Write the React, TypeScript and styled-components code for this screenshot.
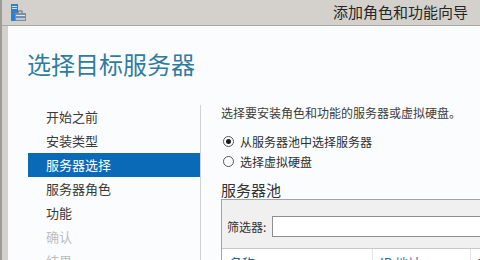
import React from "react";
import styled, { createGlobalStyle } from "styled-components";

const GlobalStyle = createGlobalStyle`
  html, body {
    margin: 0;
    padding: 0;
    background: #fbfcfd;
  }
  * {
    box-sizing: border-box;
  }
`;

const Window = styled.div`
  width: 480px;
  height: 260px;
  overflow: hidden;
  display: flex;
  flex-direction: column;
  background: #d4d1cc;
  border-left: 2px solid #9c9b98;
  font-family: "Noto Sans CJK SC", "Noto Sans", sans-serif;
  color: #333;
`;

const TitleBar = styled.div`
  height: 26px;
  flex-shrink: 0;
  display: flex;
  align-items: center;
  justify-content: space-between;
  padding: 0 12px 0 8px;
  border-bottom: 1px solid #a9a8a5;
`;

const Title = styled.div`
  font-size: 15px;
  line-height: 20px;
  color: #262626;
  margin-top: -2px;
`;

const Content = styled.div`
  flex: 1;
  margin-left: 6px;
  background: #fbfcfd;
  display: flex;
  flex-direction: column;
  min-height: 0;
`;

const Heading = styled.h1`
  margin: 23px 0 0 19px;
  font-size: 24px;
  line-height: 30px;
  font-weight: 400;
  color: #2f7ca3;
`;

const Main = styled.div`
  margin-top: 26px;
  display: flex;
  flex: 1;
  min-height: 0;
`;

const Nav = styled.ul`
  list-style: none;
  margin: 0 0 0 20px;
  padding: 0;
  width: 172px;
  flex-shrink: 0;
`;

const NavItem = styled.li<{ $active?: boolean; $disabled?: boolean }>`
  height: 24px;
  line-height: 24px;
  padding-left: 18px;
  font-size: 13px;
  background: ${(p) => (p.$active ? "#0b6ab8" : "transparent")};
  color: ${(p) => (p.$active ? "#ffffff" : p.$disabled ? "#bdbdbd" : "#3a3a3a")};
`;

const Panel = styled.div`
  flex: 1;
  border-left: 1px solid #d2d2d2;
  padding-left: 20px;
  min-width: 0;
`;

const Description = styled.div`
  font-size: 12px;
  line-height: 16px;
  color: #3c3c3c;
  white-space: nowrap;
`;

const RadioGroup = styled.div`
  margin-top: 10px;
  display: flex;
  flex-direction: column;
`;

const RadioRow = styled.label`
  height: 20px;
  display: flex;
  align-items: center;
  gap: 6px;
  padding-left: 2px;
  font-size: 12px;
  color: #2e2e2e;
`;

const RadioCircle = styled.span<{ $checked?: boolean }>`
  width: 11px;
  height: 11px;
  border-radius: 50%;
  border: 1px solid #555;
  background: #fff;
  display: flex;
  align-items: center;
  justify-content: center;
  &::after {
    content: "";
    width: 5px;
    height: 5px;
    border-radius: 50%;
    background: ${(p) => (p.$checked ? "#1a1a1a" : "transparent")};
  }
`;

const SectionTitle = styled.div`
  margin-top: 10px;
  font-size: 15px;
  line-height: 18px;
  color: #333;
`;

const PoolBox = styled.div`
  width: 300px;
  border: 1px solid #a3a3a3;
  border-right: none;
  background: #f0f0f0;
`;

const FilterRow = styled.div`
  height: 48px;
  display: flex;
  align-items: center;
  padding-left: 5px;
  gap: 3px;
  padding-top: 4px;
`;

const FilterLabel = styled.span`
  font-size: 12px;
  color: #333;
  width: 42px;
`;

const FilterInput = styled.div`
  flex: 1;
  height: 21px;
  background: #fff;
  border: 1px solid #8e8e8e;
  border-right: none;
`;

const HeaderRow = styled.div`
  display: grid;
  grid-template-columns: 151px 98px 1fr;
  height: 24px;
  background: #fff;
  border-top: 1px solid #c9c9c9;
`;

const HeaderCell = styled.div`
  padding-left: 7px;
  padding-top: 4px;
  font-size: 13px;
  line-height: 20px;
  color: #2367a6;
  border-right: 1px solid #e3e3e3;
  white-space: nowrap;
`;

const AppIcon = () => (
  <svg width="16" height="18" viewBox="0 0 16 18">
    <rect x="1" y="0" width="7" height="17" fill="#2d7fd1" />
    <rect x="2" y="2" width="5" height="1" fill="#cfe3f7" />
    <rect x="2" y="4" width="5" height="1" fill="#cfe3f7" />
    <rect x="6" y="9" width="1" height="1" fill="#cfe3f7" />
    <rect x="8" y="7" width="4" height="3" fill="none" stroke="#5b6f80" strokeWidth="1" />
    <rect x="5" y="9" width="11" height="8" fill="#7a8fa3" />
    <rect x="6" y="11" width="9" height="1" fill="#dce6ee" />
    <rect x="6" y="14" width="9" height="2" fill="#b9c8d5" />
  </svg>
);

export default function App() {
  const steps = [
    { label: "开始之前" },
    { label: "安装类型" },
    { label: "服务器选择", active: true },
    { label: "服务器角色" },
    { label: "功能" },
    { label: "确认", disabled: true },
    { label: "结果", disabled: true },
  ];

  return (
    <>
      <GlobalStyle />
      <Window>
        <TitleBar>
          <AppIcon />
          <Title>添加角色和功能向导</Title>
        </TitleBar>
        <Content>
          <Heading>选择目标服务器</Heading>
          <Main>
            <Nav>
              {steps.map((s) => (
                <NavItem key={s.label} $active={s.active} $disabled={s.disabled}>
                  {s.label}
                </NavItem>
              ))}
            </Nav>
            <Panel>
              <Description>选择要安装角色和功能的服务器或虚拟硬盘。</Description>
              <RadioGroup>
                <RadioRow>
                  <RadioCircle $checked />
                  从服务器池中选择服务器
                </RadioRow>
                <RadioRow>
                  <RadioCircle />
                  选择虚拟硬盘
                </RadioRow>
              </RadioGroup>
              <SectionTitle>服务器池</SectionTitle>
              <PoolBox>
                <FilterRow>
                  <FilterLabel>筛选器:</FilterLabel>
                  <FilterInput />
                </FilterRow>
                <HeaderRow>
                  <HeaderCell>名称</HeaderCell>
                  <HeaderCell>IP 地址</HeaderCell>
                  <HeaderCell>操作系统</HeaderCell>
                </HeaderRow>
              </PoolBox>
            </Panel>
          </Main>
        </Content>
      </Window>
    </>
  );
}
